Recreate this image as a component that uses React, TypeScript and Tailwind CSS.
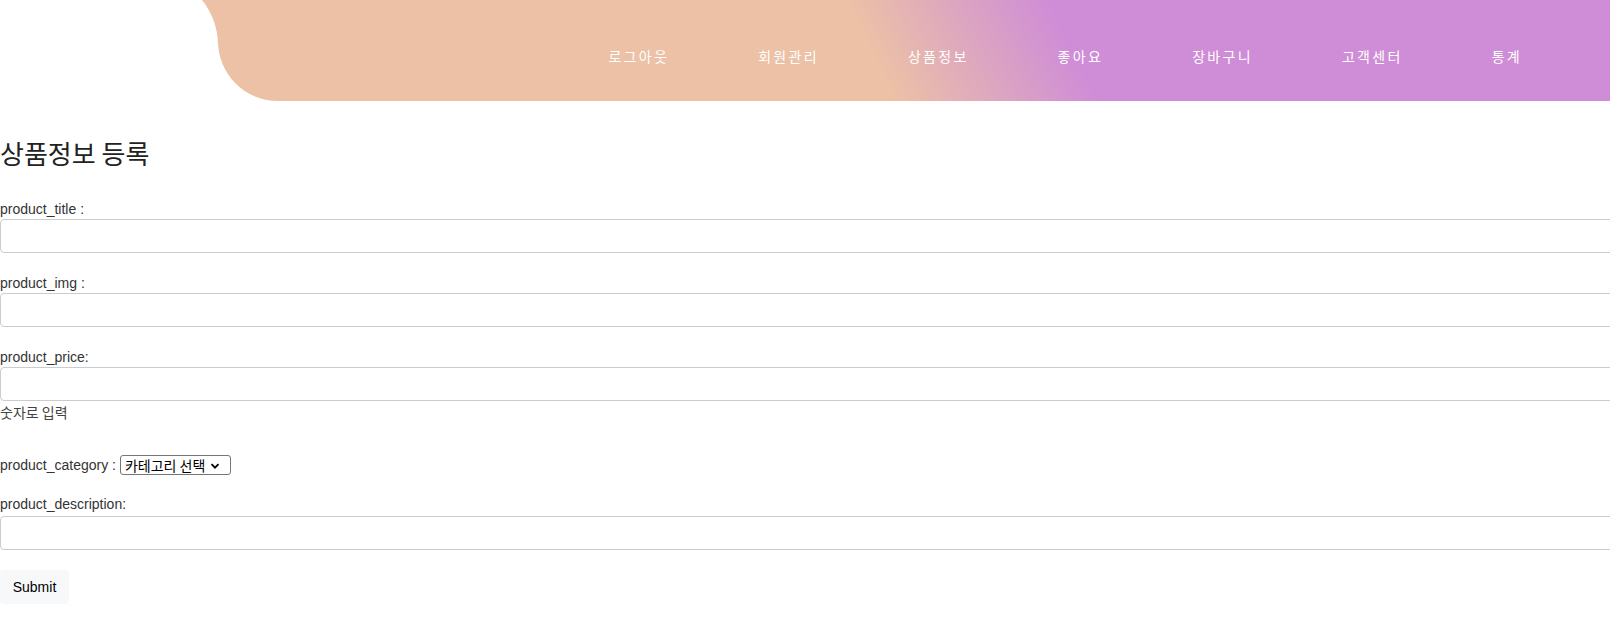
import React from "react";

const navItems = ["로그아웃", "회원관리", "상품정보", "좋아요", "장바구니", "고객센터", "통계"];

function Field({ label }: { label: string }) {
  return (
    <div className="mb-[20px]">
      <div className="leading-[20px] h-[20px]">{label}</div>
      <input
        type="text"
        className="block h-[34px] w-[calc(100%+12px)] rounded-[4px] border border-[#cccccc] bg-white"
      />
    </div>
  );
}

export default function App() {
  return (
    <div className="w-[1610px] min-h-[624px] overflow-hidden bg-white text-[14px] text-[#333333] font-['Liberation_Sans','Noto_Sans_CJK_KR',sans-serif]">
      <header className="flex h-[101px]">
        <div className="w-[218px] shrink-0 overflow-hidden bg-[#ecc1a6]">
          <div className="-mt-[26px] h-[127px] rounded-tr-[71px] bg-white" />
        </div>
        <nav className="flex flex-1 items-start justify-end gap-[89px] rounded-bl-[60px] bg-[linear-gradient(64deg,#ecc1a6_47%,#cf8dd7_61%)] pr-[88px] pt-[46px]">
          {navItems.map((item) => (
            <a
              key={item}
              className="text-[14px] leading-[20px] tracking-[2.3px] text-white font-['Noto_Sans_CJK_KR',sans-serif]"
            >
              {item}
            </a>
          ))}
        </nav>
      </header>

      <main>
        <h2 className="mt-[37px] mb-[31px] text-[26px] leading-[30px] text-[#222222] font-['Noto_Sans_CJK_KR',sans-serif]">
          상품정보 등록
        </h2>

        <Field label="product_title :" />
        <Field label="product_img :" />

        <div>
          <div className="h-[20px] leading-[20px]">product_price:</div>
          <input
            type="text"
            className="block h-[34px] w-[calc(100%+12px)] rounded-[4px] border border-[#cccccc] bg-white"
          />
          <div className="mt-[1px] leading-[20px] text-[14px] text-[#444444] font-['Noto_Sans_CJK_KR',sans-serif]">
            숫자로 입력
          </div>
        </div>

        <div className="mt-[33px] flex h-[20px] items-center">
          <span className="leading-[20px]">product_category :</span>
          <span className="ml-[4px] flex h-[20px] w-[111px] items-center rounded-[3px] border border-[#767676] bg-white pl-[4px] text-[14px] leading-[18px] text-black font-['Noto_Sans_CJK_KR',sans-serif]">
            <span>카테고리 선택</span>
            <svg width="10" height="10" viewBox="0 0 10 10" className="ml-[5px] mt-[1px]">
              <path d="M1.5 3.2 L5 6.7 L8.5 3.2" fill="none" stroke="#000" strokeWidth="1.8" />
            </svg>
          </span>
        </div>

        <div className="mt-[19px]">
          <div className="h-[20px] leading-[20px]">product_description:</div>
          <input
            type="text"
            className="mt-[2px] block h-[34px] w-[calc(100%+12px)] rounded-[4px] border border-[#cccccc] bg-white"
          />
        </div>

        <button
          type="button"
          className="mt-[20px] block h-[34px] w-[69px] rounded-[4px] bg-[#f7f8fa] text-center text-[14px] text-black"
        >
          Submit
        </button>
      </main>
    </div>
  );
}
